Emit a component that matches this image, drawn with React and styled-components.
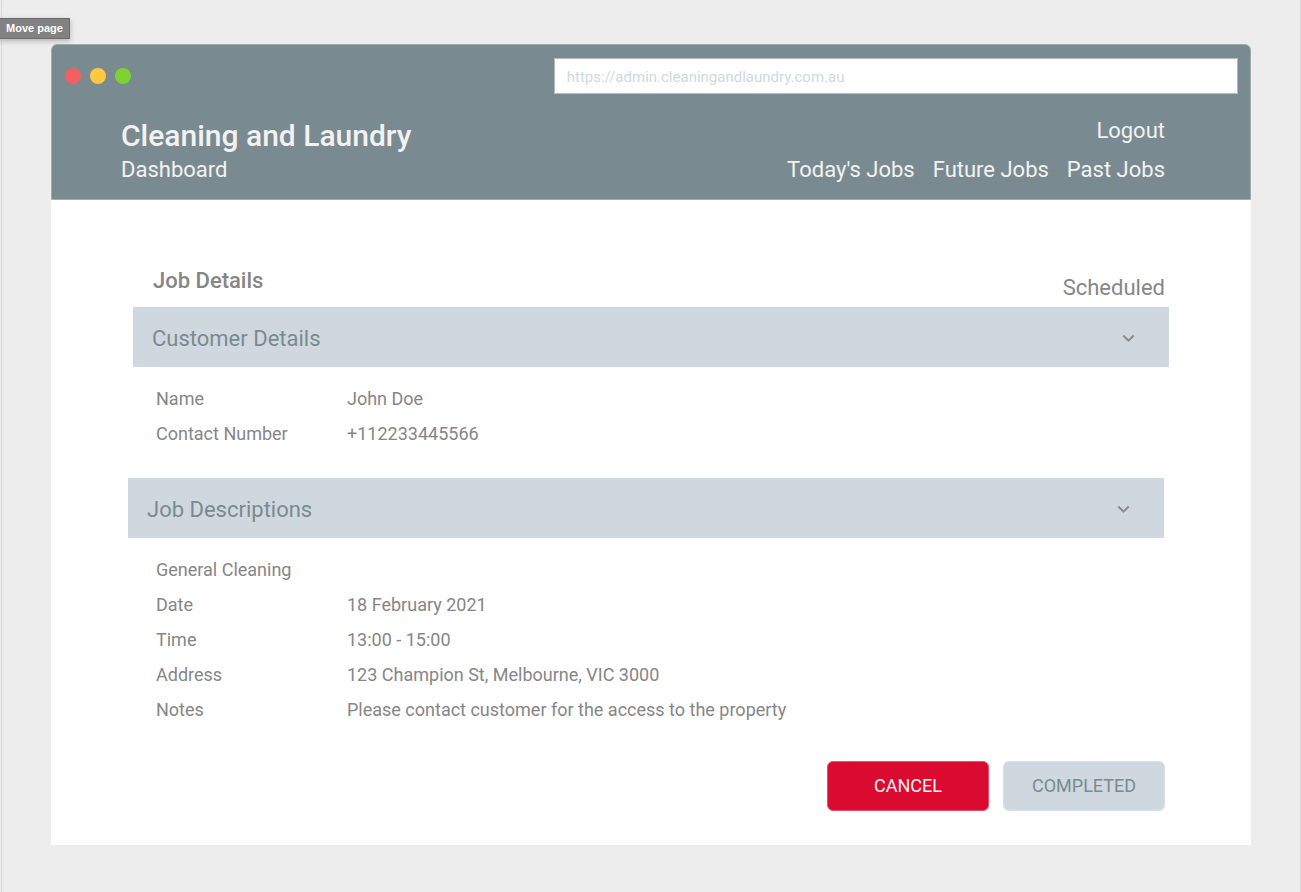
import React, { useState } from "react";
import styled, { createGlobalStyle } from "styled-components";

const GlobalStyle = createGlobalStyle`
  *, *::before, *::after { box-sizing: border-box; }
  body {
    margin: 0;
    background: #ededed;
    color: #868686;
    font-family: Roboto, "Liberation Sans", sans-serif;
  }
  button, input { font-family: inherit; }
`;

const Canvas = styled.div`
  position: relative;
  min-height: 100vh;
  padding: 44px 49px 47px;
  border-left: 1px solid #dadada;
  border-right: 1px solid #dadada;
  margin-left: 1px;
`;

const Tooltip = styled.div`
  position: absolute;
  top: 18px;
  left: -3px;
  height: 21px;
  padding: 0 6px;
  border: 1px solid #6c6c6c;
  background: #828282;
  box-shadow: 0 2px 5px rgba(0, 0, 0, 0.25);
  color: #fff;
  font: bold 11px/19px "Liberation Sans", Arial, sans-serif;
`;

const BrowserWindow = styled.div`
  background: #fff;
  border-radius: 6px 6px 0 0;
`;

const Header = styled.header`
  height: 156px;
  border: 1px solid #9fadb1;
  border-radius: 6px 6px 0 0;
  background: #798b90;
  color: #f2f2f2;
`;

const TitleBar = styled.div`
  display: flex;
  align-items: center;
  padding: 13px 12px 0 13px;
`;

const Lights = styled.div`
  display: flex;
  flex: 5 1 0;
  gap: 9px;
`;

const Light = styled.span`
  width: 16px;
  height: 16px;
  border-radius: 50%;
  background: ${(p) => p.$color};
`;

const AddressBox = styled.div`
  display: flex;
  flex: 7 1 0;
`;

const Address = styled.input`
  width: 100%;
  height: 36px;
  padding: 2px 12px 0;
  border: 1px solid #b3bec2;
  border-radius: 0;
  background: #fff;
  color: #d0d8de;
  font-size: 15px;
  outline: none;
`;

const Masthead = styled.div`
  display: flex;
  justify-content: space-between;
  align-items: flex-end;
  padding: 22px 85px 0 69px;
`;

const SiteTitle = styled.h1`
  margin: 0;
  font-size: 30px;
  font-weight: 500;
  line-height: 40px;
`;

const Subtitle = styled.div`
  font-size: 22px;
  line-height: 28px;
`;

const Nav = styled.nav`
  display: flex;
  flex-direction: column;
  align-items: flex-end;
  gap: 11px;
`;

const NavRow = styled.div`
  display: flex;
  gap: 18px;
`;

const NavLink = styled.a`
  color: inherit;
  font-size: 22px;
  line-height: 28px;
  text-decoration: none;
`;

const Main = styled.main`
  padding: 66px 86px 34px 77px;
`;

const Heading = styled.div`
  display: flex;
  justify-content: space-between;
  padding-left: 25px;
`;

const PageTitle = styled.h2`
  margin: 0;
  font-size: 22px;
  font-weight: 500;
  line-height: 30px;
`;

const Status = styled.span`
  padding-top: 7px;
  font-size: 22px;
  line-height: 30px;
`;

const Section = styled.section`
  margin-top: ${(p) => p.$gap}px;
`;

const SectionTitle = styled.h3`
  margin: ${(p) => (p.$inset ? "0 -4px 0 5px" : "0 1px 0 0")};
`;

const Bar = styled.button`
  display: flex;
  align-items: center;
  justify-content: space-between;
  width: 100%;
  height: 60px;
  padding: 2px 34px 0 19px;
  border: 0;
  background: #cfd8de;
  color: #798b90;
  font-size: 22px;
  cursor: pointer;
`;

const Chevron = styled.svg`
  width: 13px;
  height: 9px;
  fill: none;
  stroke: #868c8e;
  stroke-width: 2;
`;

const Details = styled.table`
  margin: 14px 0 0 28px;
  border-collapse: collapse;
  font-size: 18px;
  line-height: 35px;
`;

const Label = styled.th`
  min-width: 191px;
  padding: 0;
  font-weight: 400;
  text-align: left;
`;

const Value = styled.td`
  padding: 0;
`;

const Actions = styled.div`
  display: flex;
  justify-content: flex-end;
  gap: 14px;
  margin-top: 34px;
`;

const ActionButton = styled.button`
  width: 162px;
  height: 50px;
  padding: 0 0 2px;
  border: 1px solid ${(p) => (p.$danger ? "#e7506d" : "#dae1e4")};
  border-radius: 6px;
  background: ${(p) => (p.$danger ? "#da0a30" : "#cfd8de")};
  color: ${(p) => (p.$danger ? "#f5f5f5" : "#798b90")};
  font-size: 18px;
  cursor: pointer;
`;

const customer = [
  ["Name", "John Doe"],
  ["Contact Number", "+112233445566"],
];

const job = [
  ["General Cleaning", ""],
  ["Date", "18 February 2021"],
  ["Time", "13:00 - 15:00"],
  ["Address", "123 Champion St, Melbourne, VIC 3000"],
  ["Notes", "Please contact customer for the access to the property"],
];

function DetailSection({ title, rows, gap, inset }) {
  const [open, setOpen] = useState(true);
  return (
    <Section $gap={gap}>
      <SectionTitle $inset={inset}>
        <Bar type="button" aria-expanded={open} onClick={() => setOpen(!open)}>
          {title}
          <Chevron viewBox="0 0 13 9" aria-hidden="true">
            <path d="M1.3 1.5 6.5 6.7 11.7 1.5" />
          </Chevron>
        </Bar>
      </SectionTitle>
      {open && (
        <Details>
          <tbody>
            {rows.map(([label, value]) => (
              <tr key={label}>
                <Label scope="row">{label}</Label>
                <Value>{value}</Value>
              </tr>
            ))}
          </tbody>
        </Details>
      )}
    </Section>
  );
}

export default function App() {
  return (
    <Canvas>
      <GlobalStyle />
      <BrowserWindow>
        <Header>
          <TitleBar>
            <Lights>
              <Light $color="#f55f62" />
              <Light $color="#ffc83d" />
              <Light $color="#7ed22f" />
            </Lights>
            <AddressBox>
              <Address
                type="text"
                aria-label="Address"
                defaultValue="https://admin.cleaningandlaundry.com.au"
              />
            </AddressBox>
          </TitleBar>
          <Masthead>
            <div>
              <SiteTitle>Cleaning and Laundry</SiteTitle>
              <Subtitle>Dashboard</Subtitle>
            </div>
            <Nav>
              <NavLink href="#logout">Logout</NavLink>
              <NavRow>
                <NavLink href="#today">Today's Jobs</NavLink>
                <NavLink href="#future">Future Jobs</NavLink>
                <NavLink href="#past">Past Jobs</NavLink>
              </NavRow>
            </Nav>
          </Masthead>
        </Header>
        <Main>
          <Heading>
            <PageTitle>Job Details</PageTitle>
            <Status>Scheduled</Status>
          </Heading>
          <DetailSection title="Customer Details" rows={customer} gap={4} inset />
          <DetailSection title="Job Descriptions" rows={job} gap={27} />
          <Actions>
            <ActionButton type="button" $danger>
              CANCEL
            </ActionButton>
            <ActionButton type="button">COMPLETED</ActionButton>
          </Actions>
        </Main>
      </BrowserWindow>
      <Tooltip role="tooltip">Move page</Tooltip>
    </Canvas>
  );
}
